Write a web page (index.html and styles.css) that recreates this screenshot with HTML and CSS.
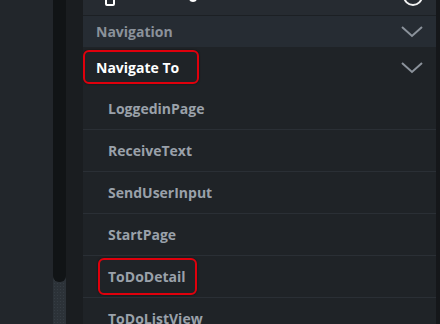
FILE: index.html
```html
<!DOCTYPE html>
<html>
<head>
<meta charset="utf-8">
<link rel="stylesheet" href="styles.css">
</head>
<body>
<div class="app">
  <div class="left"></div>
  <div class="track"><div class="thumb"></div></div>
  <div class="strip"></div>
  <div class="main">
    <div class="toprow">
      <span class="topicon"></span>
      <span class="topglyph"></span>
      <span class="ring"></span>
    </div>
    <div class="header">
      <span class="htext">Navigation</span>
      <svg class="chev" width="22" height="12" viewBox="0 0 22 12"><path d="M1 1 L11 10 L21 1" fill="none" stroke="#8b929b" stroke-width="2"/></svg>
    </div>
    <div class="group">
      <div class="grouphead">
        <span class="gtext">Navigate To</span>
        <svg class="chev" width="22" height="12" viewBox="0 0 22 12"><path d="M1 1 L11 10 L21 1" fill="none" stroke="#8b929b" stroke-width="2"/></svg>
        <span class="mark mark1"></span>
      </div>
      <div class="item">LoggedinPage</div>
      <div class="item">ReceiveText</div>
      <div class="item">SendUserInput</div>
      <div class="item">StartPage</div>
      <div class="item">ToDoDetail<span class="mark mark2"></span></div>
      <div class="item">ToDoListView</div>
    </div>
  </div>
  <div class="edge"></div>
</div>
</body>
</html>
```
FILE: styles.css
```css
html, body {
  margin: 0;
  padding: 0;
  background: #1a1d20;
  overflow: hidden;
}
.app {
  display: flex;
  width: 440px;
  height: 324px;
  font-family: "Open Sans", Lato, sans-serif;
}
.left {
  width: 53px;
  background: #22262b;
}
.track {
  width: 13px;
  background: #2c3238;
  background-image: radial-gradient(#363d44 0.6px, transparent 0.8px);
  background-size: 3px 3px;
}
.thumb {
  height: 282px;
  background: #111416;
  border-radius: 0 0 6px 6px;
}
.strip {
  width: 17px;
  background: #1a1d20;
}
.main {
  width: 353px;
  background: #1f2327;
  display: flex;
  flex-direction: column;
  overflow: hidden;
}
.main > * {
  flex-shrink: 0;
}
.edge {
  width: 4px;
  background: #15171a;
}
.toprow {
  height: 15px;
  background: #262b31;
  border-bottom: 1px solid #1c2024;
  position: relative;
  overflow: hidden;
}
.topicon {
  position: absolute;
  left: 22px;
  top: -8px;
  width: 6px;
  height: 10px;
  border: 2px solid #fff;
  border-radius: 2px;
}
.topglyph {
  position: absolute;
  left: 106px;
  top: -6px;
  width: 4px;
  height: 6px;
  border: 2px solid #fff;
  border-top: none;
  border-radius: 0 0 4px 4px;
}
.ring {
  position: absolute;
  right: 13px;
  top: -14px;
  width: 16px;
  height: 16px;
  border: 2px solid #f2f2f2;
  border-radius: 50%;
}
.header {
  height: 31px;
  background: #262c33;
  display: flex;
  align-items: center;
  justify-content: space-between;
  padding: 0 13px 0 13px;
}
.htext {
  color: #8b929b;
  font-weight: 700;
  font-size: 14px;
}
.chev {
  display: block;
}
.group {
  display: flex;
  flex-direction: column;
}
.group > * {
  flex-shrink: 0;
}
.grouphead {
  height: 41px;
  display: flex;
  align-items: center;
  justify-content: space-between;
  padding: 0 13px;
  position: relative;
}
.gtext {
  color: #ffffff;
  font-weight: 700;
  font-size: 14px;
}
.item {
  height: 41px;
  border-bottom: 1px solid #2a2f35;
  display: flex;
  align-items: center;
  padding-left: 25px;
  color: #9aa1aa;
  font-weight: 700;
  font-size: 14px;
  position: relative;
}
.mark {
  position: absolute;
  border: 2px solid #e0000c;
  border-radius: 6px;
  box-shadow: 0 0 2px rgba(0,0,0,0.6);
}
.mark1 {
  left: 0;
  top: 3px;
  width: 112px;
  height: 30px;
}
.mark2 {
  left: 15px;
  top: 2px;
  width: 95px;
  height: 33px;
}
```
